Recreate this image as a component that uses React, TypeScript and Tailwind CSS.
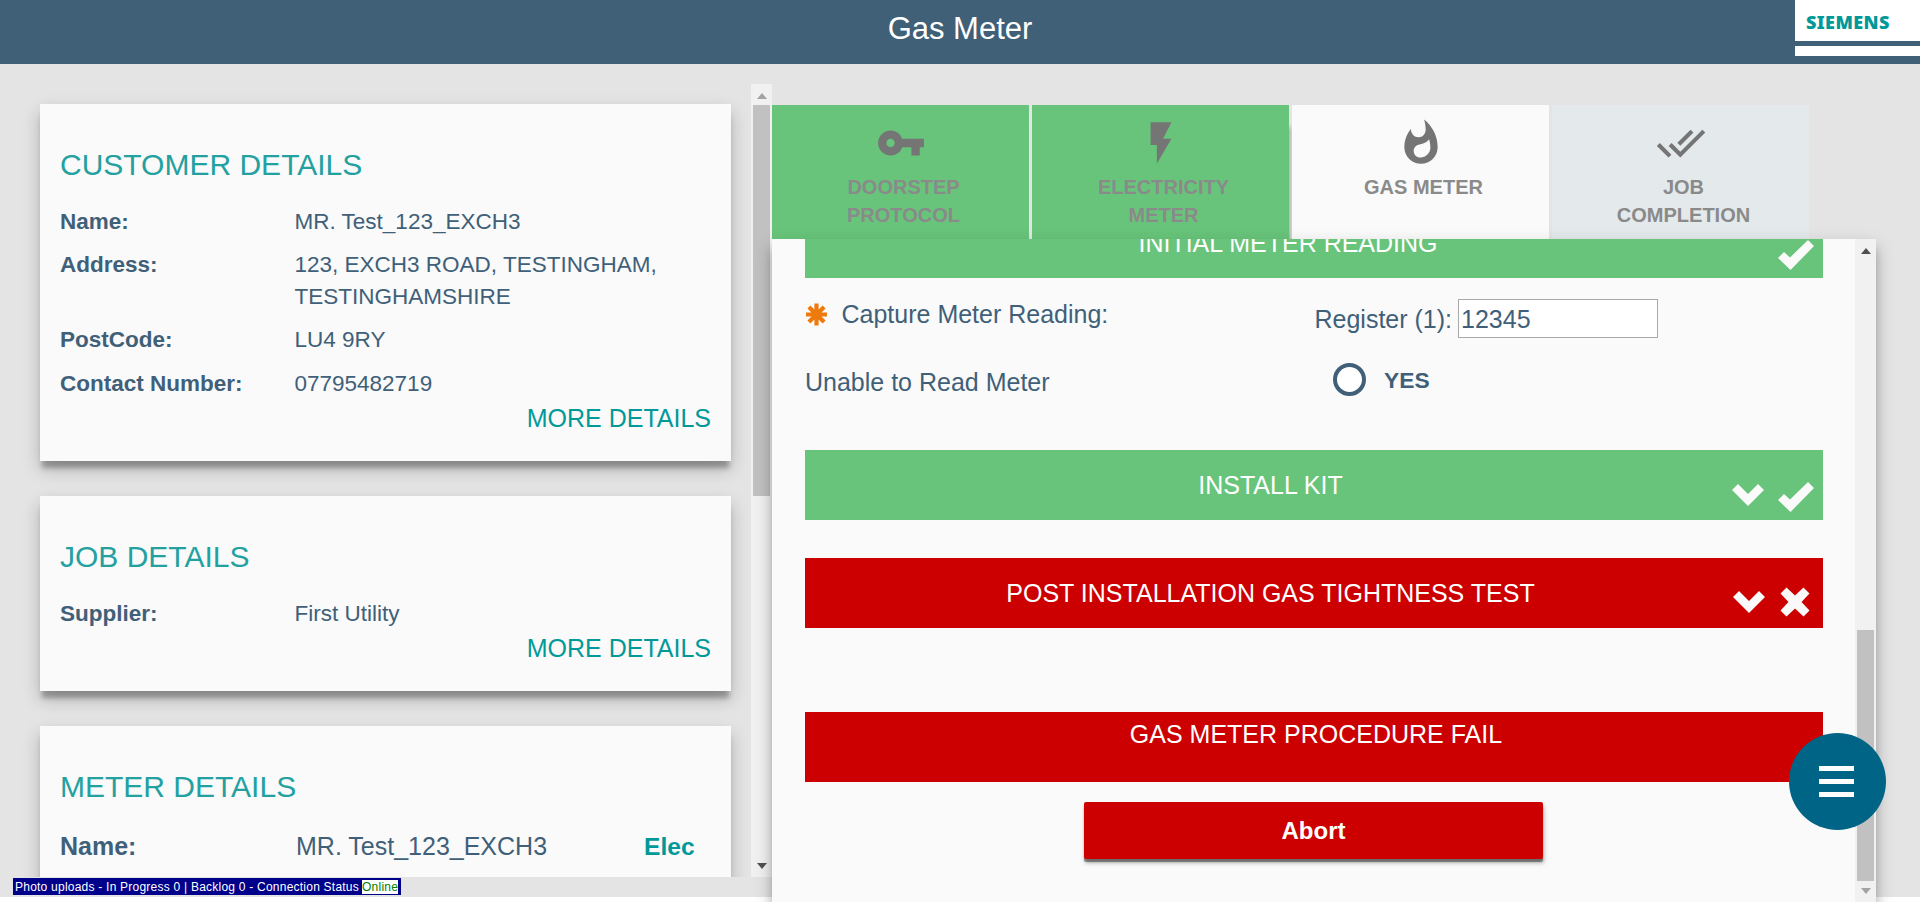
import React from "react";
import { MdVpnKey, MdFlashOn, MdWhatshot, MdDoneAll } from "react-icons/md";

const cardShadow = "shadow-[0_9px_5px_-2px_rgba(0,0,0,0.27),0_8px_17px_0_rgba(0,0,0,0.22)]";

function Row({ label, children }: { label: string; children: React.ReactNode }) {
  return (
    <div className="mb-[11.2px] flex text-[22.5px] leading-8">
      <div className="w-[234.5px] shrink-0 font-bold">{label}</div>
      <div>{children}</div>
    </div>
  );
}

function Card({ title, className, children }: { title: string; className: string; children: React.ReactNode }) {
  return (
    <section className={`shrink-0 bg-[#fafafa] pl-[20px] pr-[20px] pt-[43px] ${cardShadow} ${className}`}>
      <h2 className="mb-[23px] text-[30px] leading-[36px] text-[#23a1a0]">{title}</h2>
      {children}
    </section>
  );
}

function More() {
  return <div className="-mt-[10px] text-right text-[25px] leading-[35px] text-[#009999]">MORE DETAILS</div>;
}

function Arrow({ down, light }: { down?: boolean; light?: boolean }) {
  return (
    <svg width="10" height="6" viewBox="0 0 10 6" className={light ? "fill-[#a3a3a3]" : "fill-[#505050]"}>
      <path d={down ? "M0 0h10L5 6z" : "M0 6h10L5 0z"} />
    </svg>
  );
}

function Chevron() {
  return (
    <svg width="32" height="22" viewBox="0 0 32 22" className="fill-[#fafafa]">
      <path d="M0 6 6 0 16 10 26 0 32 6 16 22z" />
    </svg>
  );
}

function Check() {
  return (
    <svg width="36" height="30" viewBox="0 0 36 30" className="fill-[#fafafa]">
      <path d="M0 18 6 12 12 17.500 30 0 36 6 12.500 30z" />
    </svg>
  );
}

function Cross() {
  return (
    <svg width="30" height="30" viewBox="0 0 30 30" className="fill-[#fafafa]">
      <path d="M6.500 0.500 15 8.500 23.500 0.500 29.500 6.500 21.500 15 29.500 23.500 23.500 29.500 15 21.500 6.500 29.500 0.500 23.500 8.500 15 0.500 6.500z" />
    </svg>
  );
}

function Tab({ icon, lines, className }: { icon: React.ReactNode; lines: string[]; className: string }) {
  return (
    <div className={`flex h-[134px] w-[257px] flex-col items-center pt-[13px] ${className}`}>
      <div className="text-[50px] text-[#757575]">{icon}</div>
      <div className="mt-[5px] pl-[6px] text-center text-[20px] font-bold leading-7 text-[#8a8a8a]">
        {lines.map((l) => (
          <div key={l}>{l}</div>
        ))}
      </div>
    </div>
  );
}

function Bar({ title, className, icons }: { title: string; className: string; icons?: React.ReactNode }) {
  return (
    <div className={`relative h-[70px] shrink-0 text-center text-[25px] leading-[36px] text-white ${className}`}>
      {title}
      {icons}
    </div>
  );
}

export default function App() {
  return (
    <div className="relative flex h-[902px] w-[1920px] flex-col overflow-hidden bg-white font-['Liberation_Sans',Arial,sans-serif] text-[#3f6078]">
      <header className="relative h-16 shrink-0 bg-[#3f6077] pt-[7px] text-center text-[31px] leading-[43px] text-white">
        Gas Meter
        <div className="absolute right-0 top-0 h-14 w-[125px] bg-white">
          <div className="h-[41px] pl-[11px] pt-[11px] text-left font-['Noto_Sans',sans-serif] text-[18px] font-black leading-[23px] tracking-[0.4px] text-[#009999]">
            SIEMENS
          </div>
          <div className="h-[5px] bg-[#3f6077]" />
        </div>
      </header>

      <div className="flex h-[833px] shrink-0 bg-[#e4e4e4]">
        <div className="flex w-[772px] flex-col pt-5">
          <div className="flex h-[793px] overflow-hidden">
            <div className="flex w-[751px] flex-col gap-[35px] pl-10 pr-5 pt-5">
              <Card title="CUSTOMER DETAILS" className="h-[357px]">
                <Row label="Name:">MR. Test_123_EXCH3</Row>
                <Row label="Address:">
                  123, EXCH3 ROAD, TESTINGHAM,
                  <br />
                  TESTINGHAMSHIRE
                </Row>
                <Row label="PostCode:">LU4 9RY</Row>
                <Row label="Contact Number:">07795482719</Row>
                <More />
              </Card>
              <Card title="JOB DETAILS" className="h-[195px]">
                <Row label="Supplier:">First Utility</Row>
                <More />
              </Card>
              <Card title="METER DETAILS" className="h-[260px]">
                <div className="flex pt-[1px] text-[25px] leading-[35px]">
                  <div className="w-[236px] font-bold">Name:</div>
                  <div className="w-[348px]">MR. Test_123_EXCH3</div>
                  <div className="text-[24.600px] font-bold text-[#009999]">Elec</div>
                </div>
              </Card>
            </div>
            <div className="flex w-[21px] flex-col items-center bg-[#f1f1f1]">
              <div className="flex h-[21px] items-center pt-[2px]"><Arrow light /></div>
              <div className="h-[391px] w-[17px] bg-[#c1c1c1]" />
              <div className="mt-auto flex h-[21px] items-center pb-[2px]"><Arrow down /></div>
            </div>
          </div>
          <div className="ml-[13px] mt-px flex h-[17px] w-[388px] items-center whitespace-nowrap bg-[#00008b] pl-[2px] text-[12px] leading-[14px] tracking-[0.23px] text-white">
            Photo uploads - In Progress 0 | Backlog 0 - Connection Status
            <span className="ml-[3px] bg-white text-[#008000]">Online</span>
          </div>
        </div>

        <div className="flex flex-col pt-[41px]">
          <div className="flex gap-[3px]">
            <Tab className="bg-[#68c47a]" icon={<MdVpnKey />} lines={["DOORSTEP", "PROTOCOL"]} />
            <Tab className="bg-[#68c47a] shadow-[3px_20px_5px_-2px_rgba(0,0,0,0.3)]" icon={<MdFlashOn />} lines={["ELECTRICITY", "METER"]} />
            <Tab className="relative bg-[#fafafa]" icon={<MdWhatshot />} lines={["GAS METER"]} />
            <Tab className="bg-[#e4e9eb]" icon={<MdDoneAll />} lines={["JOB", "COMPLETION"]} />
          </div>
          <main className="relative flex h-[663px] w-[1104px] shrink-0 bg-[#fafafa] shadow-[0_8px_17px_0_rgba(0,0,0,0.25),0_10px_8px_0_rgba(0,0,0,0.15)]">
            <div className="flex w-[1083px] flex-col overflow-hidden pl-[33px] pr-8">
              <Bar
                title="INITIAL METER READING"
                className="-mt-[31px] bg-[#68c47a] pr-[52px] pt-[17px]"
                icons={<div className="absolute right-[9px] top-[32px]"><Check /></div>}
              />
              <div className="flex h-[172px] shrink-0 text-[25px] leading-[35px]">
                <div className="w-[509.500px]">
                  <div className="flex pt-[19px]">
                    <svg width="23" height="23" viewBox="-11.500 -11.500 23 23" className="mr-[13.500px] mt-[6px] stroke-[#ee7a0c]" strokeWidth="4.200">
                      <path d="M0-11V11M-10.500 0H10.500M-7.600-7.600 7.600 7.600M7.600-7.600-7.600 7.600" />
                    </svg>
                    Capture Meter Reading:
                  </div>
                  <div className="mt-[33px]">Unable to Read Meter</div>
                </div>
                <div className="pt-[21px]">
                  <div className="flex h-[39px] items-center">
                    <span className="mr-[6px] pt-px">Register (1):</span>
                    <div className="flex h-[39px] w-[200px] items-center border border-[#a9a9a9] bg-white pl-[2px] pt-px">12345</div>
                  </div>
                  <div className="flex items-center pl-[18px] pt-[24px]">
                    <div className="h-[33px] w-[33px] rounded-full border-4 border-[#3f6078] bg-white" />
                    <span className="ml-[18.500px] mt-[2px] text-[22.800px] font-bold leading-8">YES</span>
                  </div>
                </div>
              </div>
              <Bar
                title="INSTALL KIT"
                className="bg-[#68c47a] pr-[87px] pt-[17px]"
                icons={<div className="absolute right-[9px] top-[32px] flex gap-[14px]"><div className="pt-[2px]"><Chevron /></div><Check /></div>}
              />
              <Bar
                title="POST INSTALLATION GAS TIGHTNESS TEST"
                className="mt-[38px] bg-[#cc0000] pr-[87px] pt-[17px]"
                icons={<div className="absolute right-[13.500px] top-[29px] flex gap-[15px]"><div className="pt-[4px]"><Chevron /></div><Cross /></div>}
              />
              <Bar title="GAS METER PROCEDURE FAIL" className="mt-[84px] bg-[#cc0000] pl-[4px] pt-[4px]" />
              <div className="ml-[279px] mt-5 flex h-[57px] w-[459px] shrink-0 items-center justify-center rounded-[2px] bg-[#cc0000] text-[24px] font-bold text-white shadow-[0_3px_1px_0_rgba(0,0,0,0.4),1px_4px_4px_0_rgba(0,0,0,0.3)]">
                Abort
              </div>
            </div>
            <div className="flex w-[21px] flex-col items-center bg-[#f1f1f1]">
              <div className="flex h-[21px] items-center pt-[2px]"><Arrow /></div>
              <div className="mt-[370px] h-[251px] w-[17px] bg-[#c1c1c1]" />
              <div className="flex h-[21px] items-center pb-[2px]"><Arrow down light /></div>
            </div>
          </main>
        </div>
      </div>

      <div className="absolute left-[1789px] top-[733px] flex h-[97px] w-[97px] flex-col items-center justify-center gap-[8px] rounded-full bg-[#006487] pr-[2px]">
        <div className="h-[5px] w-[35px] bg-white" />
        <div className="h-[5px] w-[35px] bg-white" />
        <div className="h-[5px] w-[35px] bg-white" />
      </div>
    </div>
  );
}
